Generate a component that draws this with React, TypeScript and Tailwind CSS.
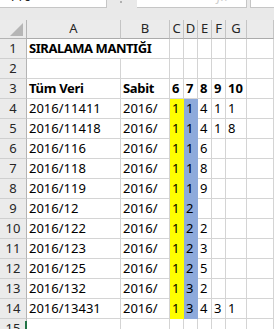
import React from "react";

const GRID = "grid grid-cols-[27px_94px_49px_14px_14px_14px_14px_21px_1fr]";

type Row = { n: number; cells: string[]; bold?: boolean };

const rows: Row[] = [
  { n: 1, cells: [] },
  { n: 2, cells: [] },
  { n: 3, cells: ["Tüm Veri", "Sabit", "6", "7", "8", "9", "10", ""], bold: true },
  { n: 4, cells: ["2016/11411", "2016/", "1", "1", "4", "1", "1", ""] },
  { n: 5, cells: ["2016/11418", "2016/", "1", "1", "4", "1", "8", ""] },
  { n: 6, cells: ["2016/116", "2016/", "1", "1", "6", "", "", ""] },
  { n: 7, cells: ["2016/118", "2016/", "1", "1", "8", "", "", ""] },
  { n: 8, cells: ["2016/119", "2016/", "1", "1", "9", "", "", ""] },
  { n: 9, cells: ["2016/12", "2016/", "1", "2", "", "", "", ""] },
  { n: 10, cells: ["2016/122", "2016/", "1", "2", "2", "", "", ""] },
  { n: 11, cells: ["2016/123", "2016/", "1", "2", "3", "", "", ""] },
  { n: 12, cells: ["2016/125", "2016/", "1", "2", "5", "", "", ""] },
  { n: 13, cells: ["2016/132", "2016/", "1", "3", "2", "", "", ""] },
  { n: 14, cells: ["2016/13431", "2016/", "1", "3", "4", "3", "1", ""] },
  { n: 15, cells: [] },
];

const headers = ["A", "B", "C", "D", "E", "F", "G", ""];

function cellClass(row: number, col: number) {
  const filled = row >= 4 && row <= 14;
  if (filled && col === 2) return "bg-[#ffff00] border-[#ffff00]";
  if (filled && col === 3) return "bg-[#8eaadb] border-[#8eaadb]";
  return "bg-white border-[#d4d4d4]";
}

export default function App() {
  return (
    <div
      className="w-[274px] h-[329px] overflow-hidden bg-[#e9e9e9] text-[13px] text-black"
      style={{ fontFamily: '"Noto Sans", "Liberation Sans", sans-serif' }}
    >
      {/* formula bar strip */}
      <div className="h-[20px] flex items-start">
        <div className="w-[107px] h-[8px] bg-white border-r border-b border-[#c6c6c6] overflow-hidden">
          <div className="-mt-[10px] pl-[9px] leading-[13px] text-[#222]">Y16</div>
        </div>
        <div className="w-[30px] flex justify-center pl-[-2px]">
          <div className="mt-[1px] ml-[-3px] w-[2px] h-[2px] bg-[#b0b0b0]" />
        </div>
        <div className="w-[110px] h-[8px] bg-white border-r border-b border-[#c6c6c6] overflow-hidden flex gap-[22px] pl-[14px]">
          <div className="-mt-[10px] leading-[13px] text-[#d8d8d8]">✕</div>
          <div className="-mt-[10px] leading-[13px] text-[#d8d8d8]">✓</div>
          <div className="-mt-[10px] leading-[13px] text-[#cfcfcf] italic">fx</div>
        </div>
        <div className="w-[3px]" />
        <div className="flex-1 h-[8px] bg-white border-l border-b border-[#c6c6c6]" />
      </div>

      {/* column headers */}
      <div className={`${GRID} h-[19px]`}>
        <div className="relative bg-[#ebebeb] border-r border-b border-[#b4b4b4]">
          <svg className="absolute left-[10px] top-[3px]" width="13" height="13" viewBox="0 0 13 13">
            <polygon points="0,13 13,13 13,0" fill="#b6b6b6" />
          </svg>
        </div>
        {headers.map((h, i) => (
          <div
            key={i}
            className="bg-[#ebebeb] border-r border-b border-r-[#c4c4c4] border-b-[#ababab] text-center leading-[17px] text-[#262626]"
          >
            {h}
          </div>
        ))}
      </div>

      {/* rows */}
      {rows.map((r) => (
        <div key={r.n} className={`${GRID} h-[20px]`}>
          <div className="relative bg-[#ebebeb] border-r border-b border-r-[#b4b4b4] border-b-[#cfcfcf] text-center leading-[19px] text-[#262626]">
            {r.n}
            {r.n === 15 && (
              <div className="absolute right-[-1px] top-[2px] w-[2px] h-[20px] bg-[#217346]" />
            )}
          </div>
          {r.n === 1 ? (
            <>
              <div className="col-span-2 bg-white border-r border-b border-[#d4d4d4] pl-[2px] leading-[19px] font-bold whitespace-nowrap tracking-[-0.45px]">
                SIRALAMA MANTIĞI
              </div>
              {[2, 3, 4, 5, 6, 7].map((c) => (
                <div key={c} className="bg-white border-r border-b border-[#d4d4d4]" />
              ))}
            </>
          ) : (
            [0, 1, 2, 3, 4, 5, 6, 7].map((c) => (
              <div
                key={c}
                className={`${cellClass(r.n, c)} border-r border-b pl-[2px] leading-[19px] whitespace-nowrap overflow-hidden ${
                  r.bold ? "font-bold" : ""
                } ${r.bold && c < 2 ? "tracking-[-0.3px]" : ""}`}
              >
                {r.cells[c] ?? ""}
              </div>
            ))
          )}
        </div>
      ))}
    </div>
  );
}
